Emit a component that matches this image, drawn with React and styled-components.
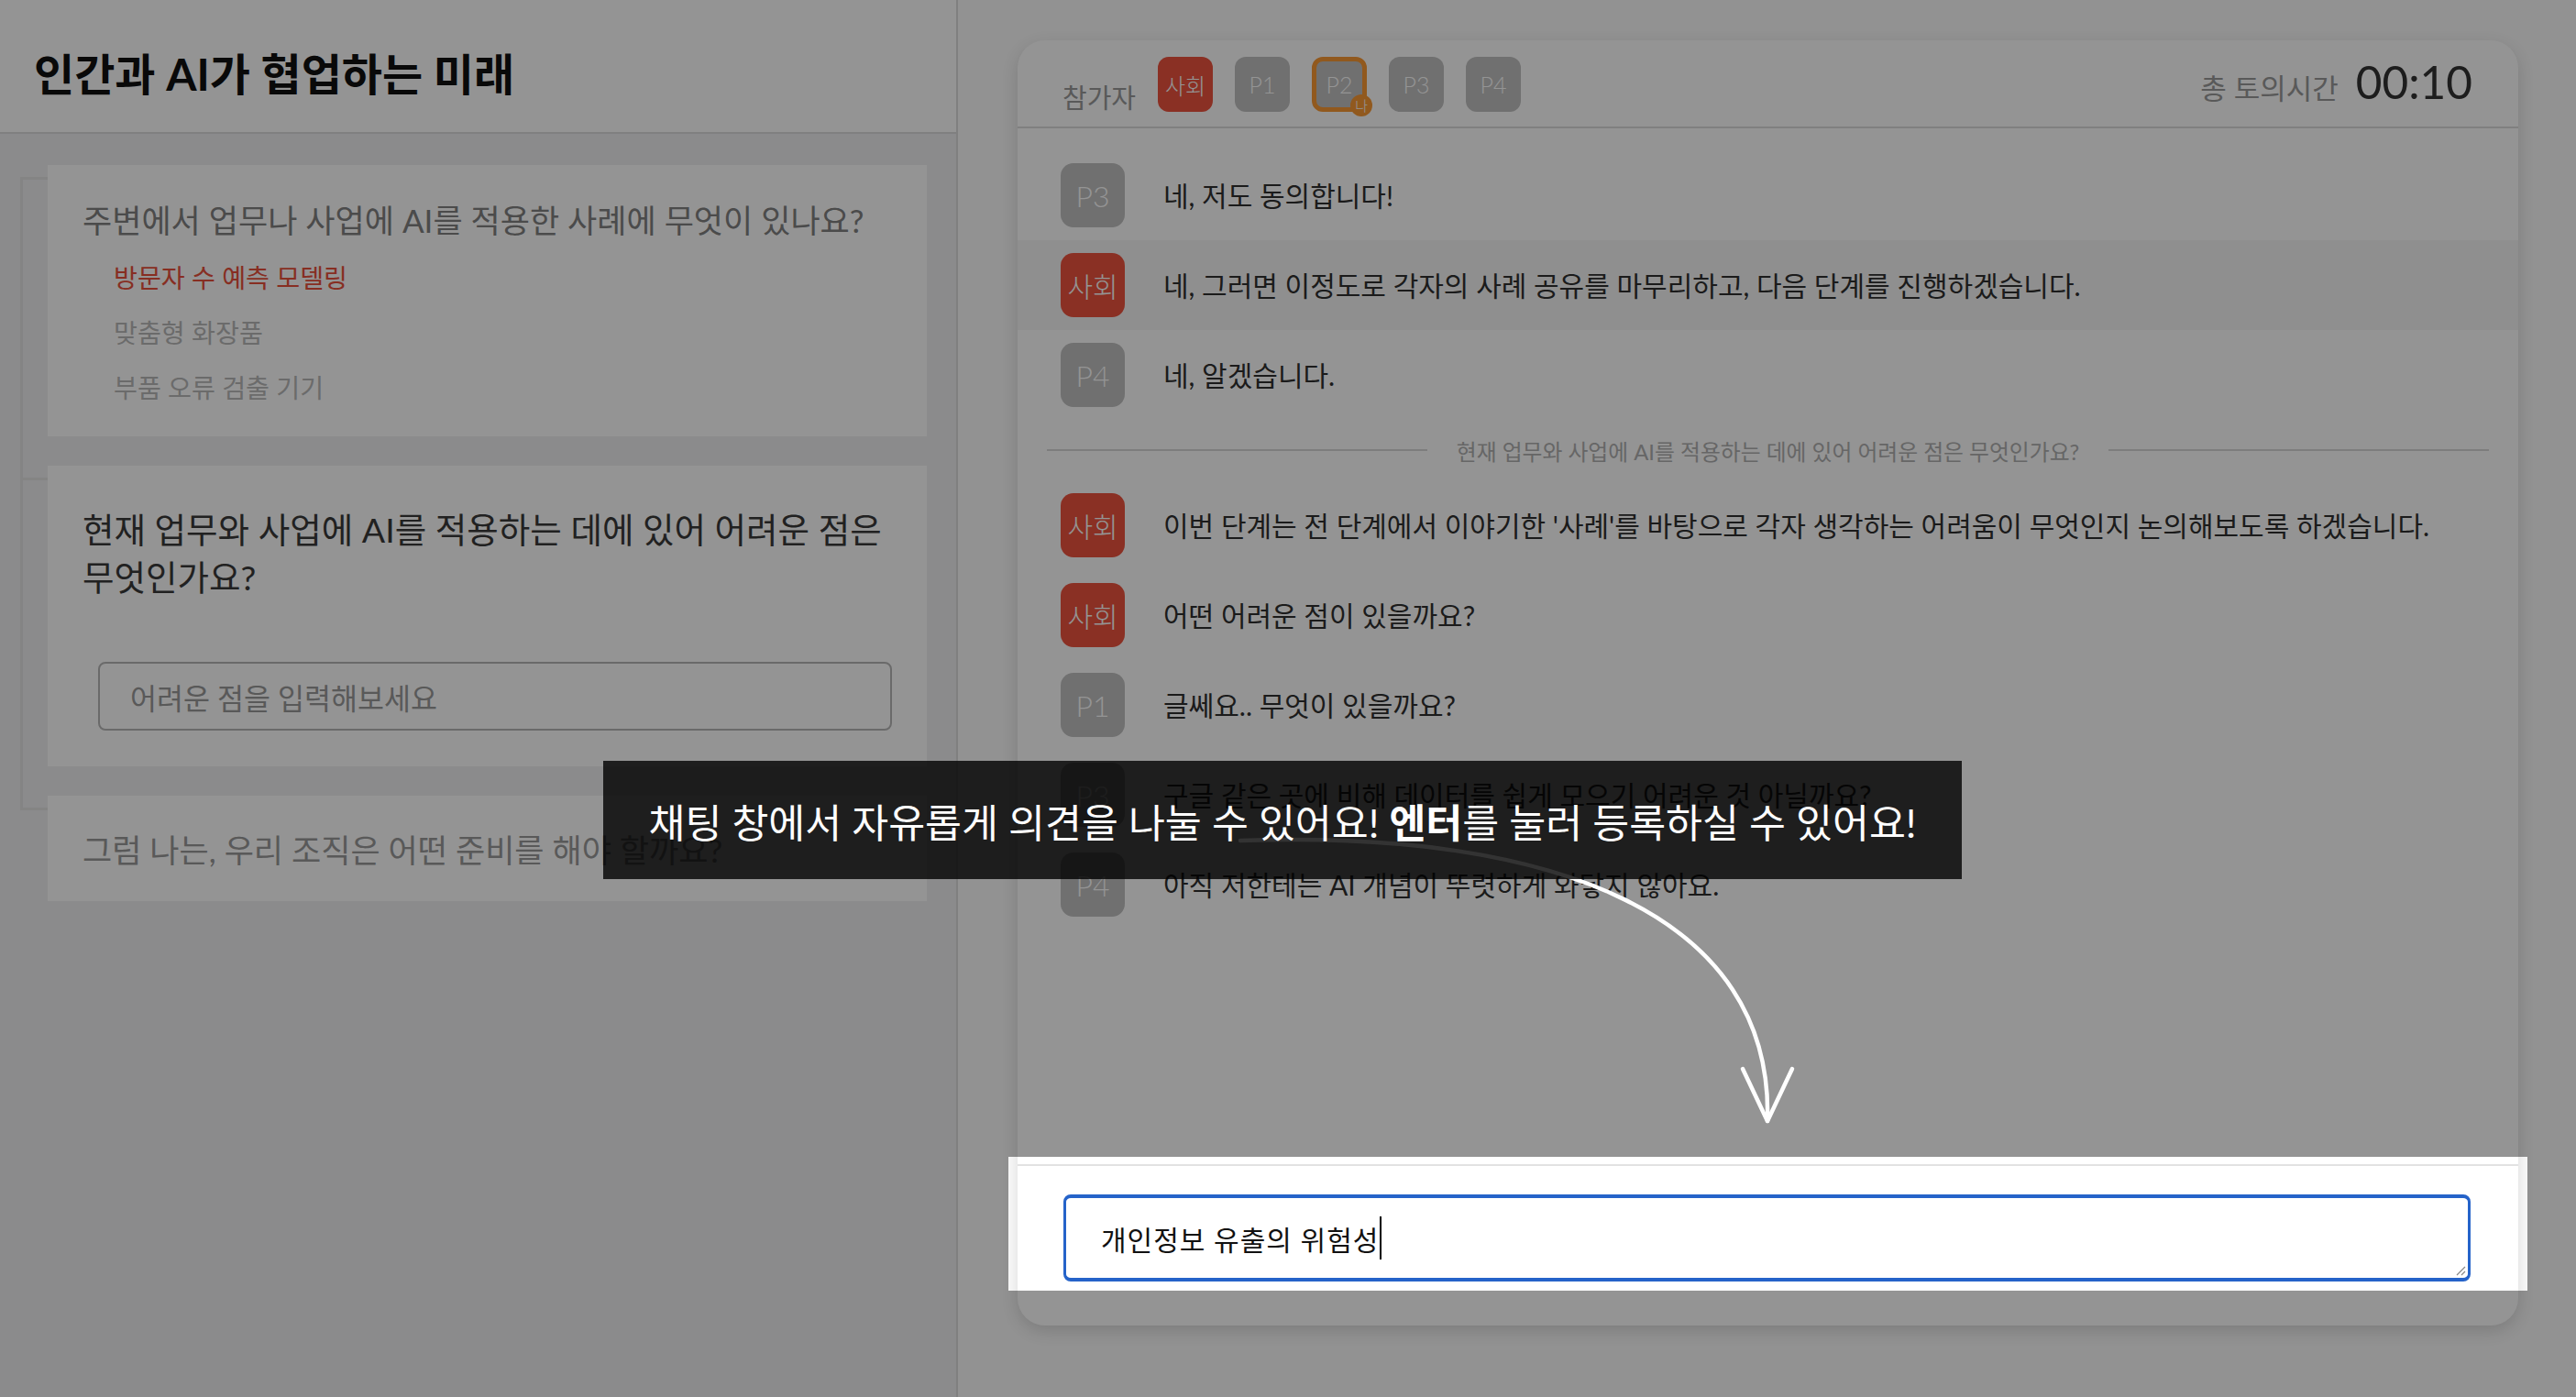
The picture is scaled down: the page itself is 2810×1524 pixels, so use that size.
import React from "react";
import styled, { createGlobalStyle, css } from "styled-components";

const FONT = `Lato, "Noto Sans CJK KR", "Noto Sans", sans-serif`;

const Global = createGlobalStyle`
  html, body, #root {
    margin: 0;
    padding: 0;
    width: 2810px;
    height: 1524px;
    overflow: hidden;
  }
  body {
    font-family: ${FONT};
    background: #fbfbfb;
  }
  *, *::before, *::after { box-sizing: border-box; }
`;

const RED = "#ee533e";
const ORANGE = "#fa9a35";
const GRAY_BADGE = "#c1c1c1";
const LINE = "#e4e4e4";

const Page = styled.div`
  position: relative;
  display: flex;
  width: 2810px;
  height: 1524px;
  background: #fbfbfb;
  font-family: ${FONT};
  word-break: keep-all;
`;

/* ---------- Sidebar ---------- */
const Sidebar = styled.aside`
  flex: none;
  width: 1045px;
  display: flex;
  flex-direction: column;
  background: #f0f0f1;
  border-right: 2px solid #dcdcdc;
`;

const SidebarHeader = styled.header`
  height: 146px;
  display: flex;
  align-items: center;
  padding: 18px 0 0 37px;
  background: #fff;
  border-bottom: 2px solid #dcdcdc;
`;

const Title = styled.h1`
  margin: 0;
  font-size: 48px;
  font-weight: 700;
  color: #111;
  line-height: 1.2;
`;

const Steps = styled.div`
  display: flex;
  flex-direction: column;
  gap: 32px;
  padding: 34px 32px 0 52px;
`;

const StepCard = styled.section`
  position: relative;
  background: #fff;
  padding: ${(p) => p.$pad};

  &::before {
    content: "";
    position: absolute;
    left: -30px;
    top: 13px;
    width: 30px;
    height: 3px;
    background: ${LINE};
  }

  ${(p) =>
    !p.$last &&
    css`
      &::after {
        content: "";
        position: absolute;
        left: -30px;
        top: 13px;
        width: 3px;
        height: calc(100% + 32px);
        background: ${LINE};
      }
    `}
`;

const StepQuestion = styled.p`
  margin: 0;
  font-size: ${(p) => p.$size}px;
  line-height: ${(p) => p.$lh}px;
  color: ${(p) => p.$color};
  white-space: ${(p) => (p.$nowrap ? "nowrap" : "normal")};
`;

const AnswerList = styled.ul`
  list-style: none;
  margin: 19px 0 0;
  padding: 0 0 0 34px;
  display: flex;
  flex-direction: column;
  gap: 20px;
`;

const Answer = styled.li`
  font-size: 28.2px;
  line-height: 40px;
  color: ${(p) => (p.$active ? "#e8503c" : "#b8b8b8")};
`;

const AnswerInput = styled.div`
  margin: 66px 14px 0 17px;
  height: 75px;
  display: flex;
  align-items: center;
  padding-left: 33px;
  border: 2px solid #b7b7b7;
  border-radius: 8px;
  font-size: 31.5px;
  color: #999;
`;

/* ---------- Main / chat ---------- */
const Main = styled.main`
  flex: 1;
  display: flex;
  padding: 44px 63px 78px 65px;
`;

const ChatPanel = styled.div`
  flex: 1;
  display: flex;
  flex-direction: column;
  background: #fff;
  border-radius: 30px;
  box-shadow: 0 6px 18px rgba(0, 0, 0, 0.14);
  padding-bottom: 48px;
`;

const PanelHeader = styled.div`
  display: flex;
  justify-content: space-between;
  align-items: flex-end;
  padding: 18px 50px 16px 49px;
  border-bottom: 2px solid #dcdcdc;
`;

const Participants = styled.div`
  display: flex;
  align-items: flex-end;
  gap: 24px;
`;

const HeaderLabel = styled.span`
  font-size: 29px;
  line-height: 30px;
  color: #999;
`;

const BadgeRow = styled.div`
  display: flex;
  gap: 24px;
`;

const Badge = styled.div`
  position: relative;
  width: 60px;
  height: 60px;
  border-radius: 12px;
  display: flex;
  align-items: center;
  justify-content: center;
  background: ${(p) => (p.$host ? RED : GRAY_BADGE)};
  color: #fff;
  font-size: ${(p) => (p.$host ? 24 : 25)}px;
  font-weight: 300;
  border: ${(p) => (p.$me ? `5px solid ${ORANGE}` : "none")};
`;

const MeDot = styled.span`
  position: absolute;
  right: -11px;
  bottom: -10px;
  width: 24px;
  height: 24px;
  border-radius: 50%;
  background: ${ORANGE};
  color: #fff;
  font-size: 15px;
  line-height: 24px;
  text-align: center;
`;

const Timer = styled.div`
  display: flex;
  align-items: baseline;
  gap: 19px;
  margin-bottom: 5px;
`;

const TimerLabel = styled.span`
  font-size: 31px;
  color: #999;
`;

const TimerValue = styled.span`
  font-size: 49.5px;
  line-height: 1;
  color: #333;
`;

const MessageList = styled.div`
  flex: 1;
  display: flex;
  flex-direction: column;
  padding-top: 24px;
`;

const Row = styled.div`
  height: 98px;
  flex: none;
  display: flex;
  align-items: center;
  gap: 42px;
  padding: 0 47px;
  background: ${(p) => (p.$highlight ? "#f6f6f6" : "transparent")};
`;

const Avatar = styled.div`
  flex: none;
  width: 70px;
  height: 70px;
  border-radius: 14px;
  display: flex;
  align-items: center;
  justify-content: center;
  background: ${(p) => (p.$host ? RED : GRAY_BADGE)};
  color: #fff;
  font-size: ${(p) => (p.$host ? 30 : 32)}px;
  font-weight: 300;
`;

const MessageText = styled.span`
  font-size: 30px;
  line-height: 1.4;
  color: #303030;
  white-space: nowrap;
`;

const Divider = styled.div`
  height: 66px;
  flex: none;
  display: flex;
  align-items: center;
  gap: 32px;
  padding: 0 32px;
`;

const DividerLine = styled.span`
  flex: 1;
  height: 2px;
  background: #d8d8d8;
`;

const DividerText = styled.span`
  font-size: 23.8px;
  color: #b0b0b0;
  white-space: nowrap;
`;

const InputForm = styled.div`
  position: relative;
  border-top: 2px solid #e2e2e2;
  padding: 31px 52px 0 50px;
`;

const Spotlight = styled.div`
  position: absolute;
  inset: -10px;
  pointer-events: none;
  box-shadow: 0 0 0 6000px rgba(0, 0, 0, 0.42);
  z-index: 10;
`;

const ChatInput = styled.div`
  position: relative;
  height: 95px;
  display: flex;
  align-items: center;
  padding-left: 38px;
  border: 3px solid #2563c9;
  border-top-width: 4px;
  border-bottom-width: 4px;
  border-radius: 8px;
  font-size: 30px;
  letter-spacing: 1px;
  color: #111;
  background: #fff;
`;

const Caret = styled.span`
  display: inline-block;
  width: 1.5px;
  height: 47px;
  margin-left: 1px;
  background: #000;
`;

const ResizeGrip = styled.svg`
  position: absolute;
  right: 2px;
  bottom: 2px;
  width: 14px;
  height: 14px;
`;

/* ---------- Coach marks ---------- */
const CoachLayer = styled.div`
  position: absolute;
  inset: 0;
  z-index: 20;
  pointer-events: none;
`;

const ArrowDrawing = styled.svg`
  position: absolute;
  left: 1340px;
  top: 890px;
  width: 640px;
  height: 350px;
  overflow: visible;
`;

const Tooltip = styled.div`
  position: absolute;
  left: 658px;
  top: 830px;
  width: 1482px;
  height: 129px;
  display: flex;
  align-items: center;
  justify-content: center;
  background: rgba(0, 0, 0, 0.8);
  color: #fff;
  font-size: 43.4px;
  white-space: nowrap;

  b {
    font-weight: 700;
  }
`;

const messagesBefore = [
  { who: "P3", text: "네, 저도 동의합니다!" },
  {
    who: "사회",
    host: true,
    highlight: true,
    text: "네, 그러면 이정도로 각자의 사례 공유를 마무리하고, 다음 단계를 진행하겠습니다.",
  },
  { who: "P4", text: "네, 알겠습니다." },
];

const messagesAfter = [
  {
    who: "사회",
    host: true,
    text: "이번 단계는 전 단계에서 이야기한 '사례'를 바탕으로 각자 생각하는 어려움이 무엇인지 논의해보도록 하겠습니다.",
  },
  { who: "사회", host: true, text: "어떤 어려운 점이 있을까요?" },
  { who: "P1", text: "글쎄요.. 무엇이 있을까요?" },
  { who: "P3", text: "구글 같은 곳에 비해 데이터를 쉽게 모으기 어려운 것 아닐까요?" },
  { who: "P4", text: "아직 저한테는 AI 개념이 뚜렷하게 와닿지 않아요." },
];

function Message({ m }) {
  return (
    <Row $highlight={m.highlight}>
      <Avatar $host={m.host}>{m.who}</Avatar>
      <MessageText>{m.text}</MessageText>
    </Row>
  );
}

export default function App() {
  return (
    <Page>
      <Global />
      <Sidebar>
        <SidebarHeader>
          <Title>인간과 AI가 협업하는 미래</Title>
        </SidebarHeader>
        <Steps>
          <StepCard $pad="36px 24px 33px 38px">
            <StepQuestion $size={35} $lh={48} $color="#818181" $nowrap>
              주변에서 업무나 사업에 AI를 적용한 사례에 무엇이 있나요?
            </StepQuestion>
            <AnswerList>
              <Answer $active>방문자 수 예측 모델링</Answer>
              <Answer>맞춤형 화장품</Answer>
              <Answer>부품 오류 검출 기기</Answer>
            </AnswerList>
          </StepCard>
          <StepCard $pad="44px 24px 39px 38px">
            <StepQuestion $size={37.5} $lh={52} $color="#3a3a3a">
              현재 업무와 사업에 AI를 적용하는 데에 있어 어려운 점은 무엇인가요?
            </StepQuestion>
            <AnswerInput>어려운 점을 입력해보세요</AnswerInput>
          </StepCard>
          <StepCard $pad="35px 24px 32px 38px" $last>
            <StepQuestion $size={35} $lh={48} $color="#999" $nowrap>
              그럼 나는, 우리 조직은 어떤 준비를 해야 할까요?
            </StepQuestion>
          </StepCard>
        </Steps>
      </Sidebar>

      <Main>
        <ChatPanel>
          <PanelHeader>
            <Participants>
              <HeaderLabel>참가자</HeaderLabel>
              <BadgeRow>
                <Badge $host>사회</Badge>
                <Badge>P1</Badge>
                <Badge $me>
                  P2
                  <MeDot>나</MeDot>
                </Badge>
                <Badge>P3</Badge>
                <Badge>P4</Badge>
              </BadgeRow>
            </Participants>
            <Timer>
              <TimerLabel>총 토의시간</TimerLabel>
              <TimerValue>00:10</TimerValue>
            </Timer>
          </PanelHeader>

          <MessageList>
            {messagesBefore.map((m, i) => (
              <Message key={"b" + i} m={m} />
            ))}
            <Divider>
              <DividerLine />
              <DividerText>
                현재 업무와 사업에 AI를 적용하는 데에 있어 어려운 점은 무엇인가요?
              </DividerText>
              <DividerLine />
            </Divider>
            {messagesAfter.map((m, i) => (
              <Message key={"a" + i} m={m} />
            ))}
          </MessageList>

          <InputForm>
            <Spotlight />
            <ChatInput>
              개인정보 유출의 위험성
              <Caret />
              <ResizeGrip viewBox="0 0 14 14">
                <path d="M13 4 L4 13 M13 9 L9 13" stroke="#888" strokeWidth="1.2" fill="none" />
              </ResizeGrip>
            </ChatInput>
          </InputForm>
        </ChatPanel>
      </Main>

      <CoachLayer>
        <ArrowDrawing viewBox="1340 890 640 350">
          <path
            d="M1353 917 C 1700 905, 1935 1000, 1928 1223"
            stroke="#fff"
            strokeWidth="4.5"
            fill="none"
            strokeLinecap="round"
          />
          <path
            d="M1901 1166 L1928 1223 L1955 1166"
            stroke="#fff"
            strokeWidth="4.5"
            fill="none"
            strokeLinecap="round"
            strokeLinejoin="round"
          />
        </ArrowDrawing>
        <Tooltip>
          채팅 창에서 자유롭게 의견을 나눌 수 있어요!&nbsp;<b>엔터</b>를 눌러 등록하실 수 있어요!
        </Tooltip>
      </CoachLayer>
    </Page>
  );
}
